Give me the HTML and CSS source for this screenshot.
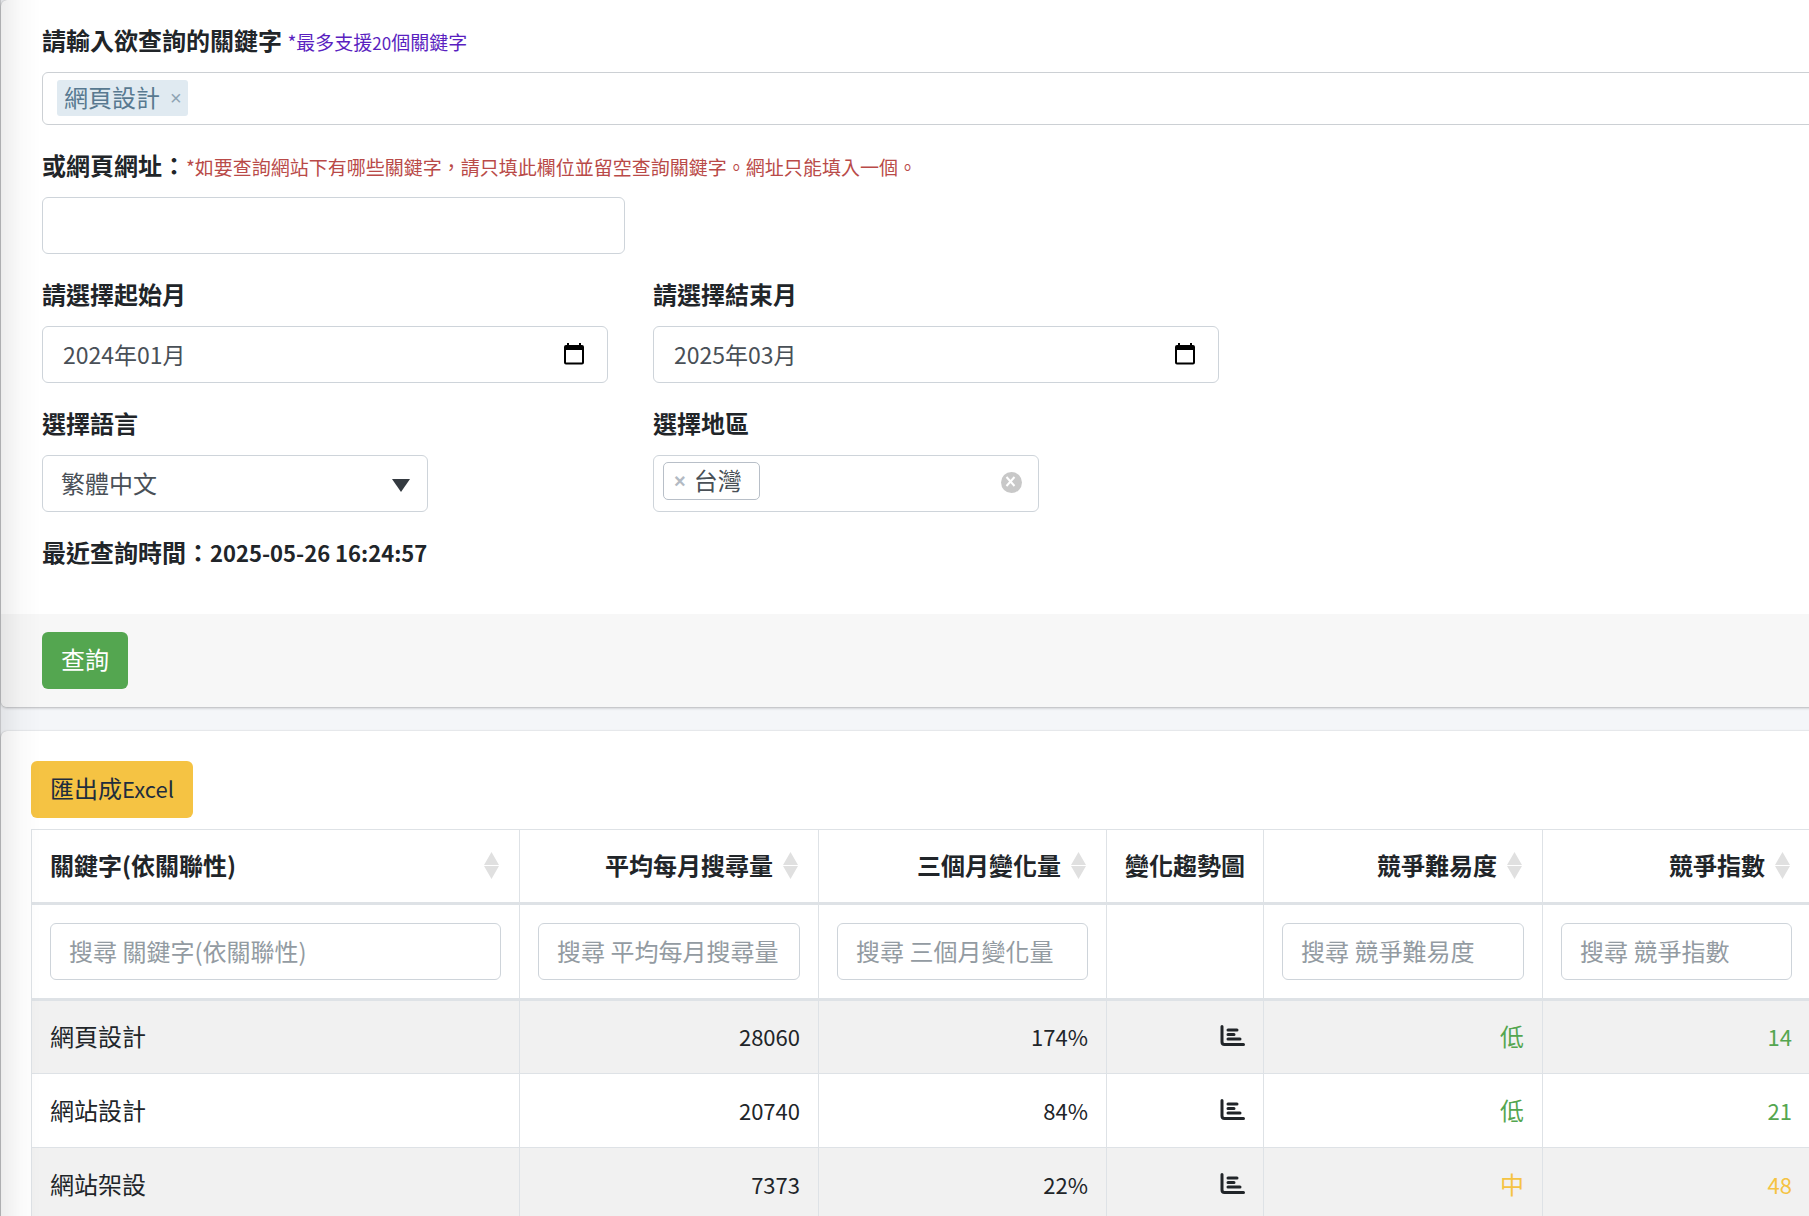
FILE: index.html
```html
<!DOCTYPE html>
<html lang="zh-Hant">
<head>
  <meta charset="UTF-8">
  <meta name="viewport" content="width=device-width, initial-scale=1">
  <title>關鍵字查詢</title>
  <link rel="stylesheet" href="styles.css">
</head>
<body>

<!-- 共用圖示 -->
<svg class="icon-defs" aria-hidden="true">
  <symbol id="icon-sort" viewBox="0 0 15 27">
    <path d="M7.5 0L15 13H0zM0 14h15L7.5 27z" fill="#e0e0e0"/>
  </symbol>
  <symbol id="icon-chart" viewBox="0 0 25 22">
    <path d="M2 1.5V17q0 2.5 2.5 2.5h19M8 5h9M8 9.5h6M8 14h12" fill="none" stroke="currentColor" stroke-width="3" stroke-linecap="round" stroke-linejoin="round"/>
  </symbol>
  <symbol id="icon-calendar" viewBox="0 0 20 22">
    <path d="M3 0h2v2h10V0h2v2h1a2 2 0 0 1 2 2v15.500a2 2 0 0 1-2 2H2a2 2 0 0 1-2-2V4a2 2 0 0 1 2-2h1zM2 7v12.500h16V7z" fill="#000" fill-rule="evenodd"/>
  </symbol>
</svg>

<div class="page">

  <!-- 查詢表單 -->
  <form class="card" onsubmit="return false">
    <div class="card-body">
      <div class="form-group">
        <label for="keyword">請輸入欲查詢的關鍵字 <small class="note-purple">*最多支援<span>20</span>個關鍵字</small></label>
        <div class="tags-input">
          <span class="tag">網頁設計<button type="button" class="tag-remove" aria-label="移除">×</button></span>
          <input type="text" id="keyword">
        </div>
      </div>

      <div class="form-group">
        <label for="url">或網頁網址：<small class="note-red">*如要查詢網站下有哪些關鍵字，請只填此欄位並留空查詢關鍵字。網址只能填入一個。</small></label>
        <input type="text" id="url" class="form-control url-input">
      </div>

      <div class="form-row">
        <div class="form-group">
          <label for="startMonth">請選擇起始月</label>
          <div class="form-control month-box">
            <input type="text" id="startMonth" value="2024年01月">
            <button type="button" aria-label="選擇月份"><svg><use href="#icon-calendar"/></svg></button>
          </div>
        </div>
        <div class="form-group">
          <label for="endMonth">請選擇結束月</label>
          <div class="form-control month-box">
            <input type="text" id="endMonth" value="2025年03月">
            <button type="button" aria-label="選擇月份"><svg><use href="#icon-calendar"/></svg></button>
          </div>
        </div>
      </div>

      <div class="form-row">
        <div class="form-group">
          <label for="language">選擇語言</label>
          <div class="select-box">
            <select id="language" class="form-control">
              <option>繁體中文</option>
            </select>
            <svg class="caret" viewBox="0 0 18 13"><path d="M0 0h18L9 13z" fill="#343a40"/></svg>
          </div>
        </div>
        <div class="form-group">
          <label for="region">選擇地區</label>
          <div class="form-control region-box">
            <span class="region"><button type="button" aria-label="移除台灣">×</button>台灣</span>
            <input type="text" id="region">
            <button type="button" class="region-clear" aria-label="清除">
              <svg viewBox="0 0 21 21"><circle cx="10.500" cy="10.500" r="10.500" fill="#c8c8c8"/><path d="M5.500 5l8 9M13.500 5l-8 9" stroke="#fff" stroke-width="2"/></svg>
            </button>
          </div>
        </div>
      </div>

      <p class="last-query">最近查詢時間：<time>2025-05-26 16:24:57</time></p>
    </div>
    <div class="card-footer">
      <button type="submit" class="btn btn-success">查詢</button>
    </div>
  </form>

  <!-- 查詢結果 -->
  <div class="card result">
    <button type="button" class="btn btn-warning">匯出成<span>Excel</span></button>
    <table>
      <colgroup>
        <col>
        <col class="col-volume">
        <col class="col-change">
        <col class="col-trend">
        <col class="col-level">
        <col class="col-index">
      </colgroup>
      <thead>
        <tr>
          <th><div class="sort">關鍵字(依關聯性)<svg><use href="#icon-sort"/></svg></div></th>
          <th><div class="sort">平均每月搜尋量<svg><use href="#icon-sort"/></svg></div></th>
          <th><div class="sort">三個月變化量<svg><use href="#icon-sort"/></svg></div></th>
          <th>變化趨勢圖</th>
          <th><div class="sort">競爭難易度<svg><use href="#icon-sort"/></svg></div></th>
          <th><div class="sort">競爭指數<svg><use href="#icon-sort"/></svg></div></th>
        </tr>
        <tr>
          <td><input class="form-control" type="text" placeholder="搜尋 關鍵字(依關聯性)" aria-label="搜尋 關鍵字(依關聯性)"></td>
          <td><input class="form-control" type="text" placeholder="搜尋 平均每月搜尋量" aria-label="搜尋 平均每月搜尋量"></td>
          <td><input class="form-control" type="text" placeholder="搜尋 三個月變化量" aria-label="搜尋 三個月變化量"></td>
          <td></td>
          <td><input class="form-control" type="text" placeholder="搜尋 競爭難易度" aria-label="搜尋 競爭難易度"></td>
          <td><input class="form-control" type="text" placeholder="搜尋 競爭指數" aria-label="搜尋 競爭指數"></td>
        </tr>
      </thead>
      <tbody>
        <tr>
          <td>網頁設計</td>
          <td class="num">28060</td>
          <td class="num">174%</td>
          <td><a href="#" aria-label="趨勢圖"><svg><use href="#icon-chart"/></svg></a></td>
          <td class="low">低</td>
          <td class="num low">14</td>
        </tr>
        <tr>
          <td>網站設計</td>
          <td class="num">20740</td>
          <td class="num">84%</td>
          <td><a href="#" aria-label="趨勢圖"><svg><use href="#icon-chart"/></svg></a></td>
          <td class="low">低</td>
          <td class="num low">21</td>
        </tr>
        <tr>
          <td>網站架設</td>
          <td class="num">7373</td>
          <td class="num">22%</td>
          <td><a href="#" aria-label="趨勢圖"><svg><use href="#icon-chart"/></svg></a></td>
          <td class="mid">中</td>
          <td class="num mid">48</td>
        </tr>
      </tbody>
    </table>
  </div>

</div>

</body>
</html>
```
FILE: styles.css
```css
* {
  box-sizing: border-box;
}
body {
  margin: 0;
  height: 100vh;
  overflow: hidden;
  background: #f4f6f9;
  color: #212529;
  font-family: "Noto Sans CJK TC", sans-serif;
  font-size: 24px;
  line-height: 36px;
}
/* 側邊欄投射在內容上的陰影 */
body::after {
  content: "";
  position: fixed;
  inset: 0 auto 0 0;
  width: 40px;
  border-left: 1px solid rgba(0, 0, 0, 0.2);
  background: linear-gradient(to right, rgba(0, 0, 0, 0.07), rgba(0, 0, 0, 0.02) 50%, transparent);
  pointer-events: none;
}
button, input, select {
  font: inherit;
  color: inherit;
}
button {
  padding: 0;
  border: 0;
  background: none;
  cursor: pointer;
}
.icon-defs {
  display: none;
}
/* 內容比視窗寬，右側超出畫面 */
.page {
  margin-left: 1px;
  margin-right: -60px;
}

.card {
  margin-bottom: 24px;
  background: #fff;
  border-radius: 6px;
  box-shadow: 0 0 1px rgba(0, 0, 0, 0.2), 0 1px 3px rgba(0, 0, 0, 0.25);
}
.card-body {
  padding: 22px 41px 44px;
}
.card-footer {
  padding: 18px 41px;
  background: #f7f7f7;
  border-radius: 0 0 6px 6px;
}

.form-group {
  margin-bottom: 22px;
}
.form-group label {
  display: block;
  margin-bottom: 14px;
  font-weight: bold;
}
.form-group small {
  font-size: 19px;
  font-weight: normal;
  line-height: 1;
}
.form-group small span {
  font-size: 17px;
}
.note-purple {
  color: #5a1fc0;
}
.note-red {
  color: #b94a48;
}
.form-row {
  display: grid;
  grid-template-columns: 566px 566px;
  gap: 45px;
}
.form-control {
  display: block;
  width: 100%;
  height: 57px;
  padding: 8px 18px 10px;
  border: 1px solid #ced4da;
  border-radius: 6px;
  background: #fff;
  color: #495057;
}
.form-control::placeholder {
  color: #939ba2;
  opacity: 1;
}
.url-input {
  width: 583px;
}

.tags-input {
  display: flex;
  padding: 7px 14px 8px;
  border: 1px solid #ccd0d4;
  border-radius: 6px;
}
.tags-input input {
  flex: 1;
  height: 36px;
  padding: 0 8px;
  border: 0;
  outline: 0;
}
.tag {
  display: flex;
  gap: 10px;
  height: 36px;
  padding: 0 6px 0 7px;
  border-radius: 3px;
  background: #e0eaf1;
  color: #587990;
  line-height: 34px;
}
.tag-remove {
  color: #8ea3b3;
  font-family: "Liberation Sans", sans-serif;
  font-size: 20px;
}

.month-box {
  display: flex;
  align-items: center;
  gap: 12px;
  padding: 8px 23px 10px 20px;
}
.month-box input {
  flex: 1;
  min-width: 0;
  padding: 0;
  border: 0;
  outline: 0;
  font-size: 23px;
}
.month-box svg {
  display: block;
  width: 20px;
  height: 22px;
}

.select-box {
  position: relative;
  width: 386px;
}
.select-box select {
  appearance: none;
}
.caret {
  position: absolute;
  right: 18px;
  top: 24px;
  width: 18px;
  height: 13px;
  pointer-events: none;
}

.region-box {
  display: flex;
  align-items: flex-start;
  width: 386px;
  padding: 6px 16px 8px 9px;
}
.region {
  display: flex;
  gap: 8px;
  height: 38px;
  padding: 0 17px 0 10px;
  border: 1px solid #b8bfc8;
  border-radius: 5px;
  line-height: 34px;
}
.region button {
  color: #b3bac3;
  font-family: "Liberation Sans", sans-serif;
  font-weight: bold;
  font-size: 20px;
}
.region-box input {
  flex: 1;
  min-width: 0;
  border: 0;
  outline: 0;
}
.region-clear {
  align-self: center;
}
.region-clear svg {
  display: block;
  width: 21px;
  height: 21px;
}

.last-query {
  margin: 0;
  font-weight: bold;
}
.last-query time {
  font-size: 22px;
  line-height: 1;
}

.btn {
  height: 57px;
  padding: 0 19px 3px;
  border-radius: 6px;
}
.btn-success {
  background: #54a650;
  color: #fff;
}
.btn-warning {
  background: #f5c343;
  color: #1f2d3d;
}
.btn-warning span {
  font-size: 22px;
  line-height: 1;
}

.result {
  padding: 30px;
}
table {
  width: calc(100% - 28px);
  margin-top: 11px;
  table-layout: fixed;
  border-collapse: collapse;
}
.col-volume {
  width: 299px;
}
.col-change {
  width: 288px;
}
.col-trend {
  width: 157px;
}
.col-level {
  width: 279px;
}
.col-index {
  width: 268px;
}
th, td {
  height: 74px;
  padding: 17px 18px 19px;
  border: 1px solid #dee2e6;
  text-align: right;
  white-space: nowrap;
}
th:first-child, td:first-child {
  text-align: left;
}
thead th, thead td {
  border-bottom: 3px solid #dee2e6;
}
thead td {
  padding: 18px;
}
.sort {
  display: flex;
  align-items: center;
  justify-content: flex-end;
  gap: 10px;
  padding-right: 2px;
}
th:first-child .sort {
  justify-content: space-between;
}
.sort svg {
  width: 15px;
  height: 27px;
}
tbody tr:nth-child(odd) {
  background: #f1f1f1;
}
tbody a {
  display: flex;
  justify-content: flex-end;
  color: #212529;
}
tbody a svg {
  width: 25px;
  height: 22px;
}
.num {
  font-size: 22px;
}
.low {
  color: #54a650;
}
.mid {
  color: #f5c343;
}
```
